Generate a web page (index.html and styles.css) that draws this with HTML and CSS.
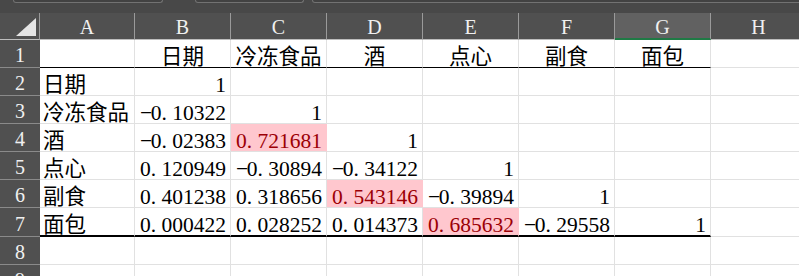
FILE: index.html
```html
<!DOCTYPE html>
<html lang="zh">
<head>
<meta charset="utf-8">
<link rel="stylesheet" href="styles.css">
</head>
<body>
<div class="app">
  <div class="topbar">
    <div class="box box1"></div>
    <div class="box box2"></div>
    <div class="box box3"></div>
  </div>
  <div class="sheet">
    <div class="corner"><svg width="20" height="18" viewBox="0 0 20 18"><polygon points="20,0 20,18 0,18" fill="#e4e4e4"/></svg></div>
    <div class="ch">A</div><div class="ch">B</div><div class="ch">C</div><div class="ch">D</div><div class="ch">E</div><div class="ch">F</div><div class="ch sel">G</div><div class="ch">H</div>

    <div class="rh">1</div>
    <div class="c bb1"></div><div class="c ctr bb1">日期</div><div class="c ctr bb1">冷冻食品</div><div class="c ctr bb1">酒</div><div class="c ctr bb1">点心</div><div class="c ctr bb1">副食</div><div class="c ctr bb1">面包</div><div class="c"></div>

    <div class="rh">2</div>
    <div class="c lbl">日期</div><div class="c num">1</div><div class="c"></div><div class="c"></div><div class="c"></div><div class="c"></div><div class="c"></div><div class="c"></div>

    <div class="rh">3</div>
    <div class="c lbl">冷冻食品</div><div class="c num"><span class="m">−</span>0<span class="d">.</span>10322</div><div class="c num">1</div><div class="c"></div><div class="c"></div><div class="c"></div><div class="c"></div><div class="c"></div>

    <div class="rh">4</div>
    <div class="c lbl">酒</div><div class="c num"><span class="m">−</span>0<span class="d">.</span>02383</div><div class="c num pk">0<span class="d">.</span>721681</div><div class="c num">1</div><div class="c"></div><div class="c"></div><div class="c"></div><div class="c"></div>

    <div class="rh">5</div>
    <div class="c lbl">点心</div><div class="c num">0<span class="d">.</span>120949</div><div class="c num"><span class="m">−</span>0<span class="d">.</span>30894</div><div class="c num"><span class="m">−</span>0<span class="d">.</span>34122</div><div class="c num">1</div><div class="c"></div><div class="c"></div><div class="c"></div>

    <div class="rh">6</div>
    <div class="c lbl">副食</div><div class="c num">0<span class="d">.</span>401238</div><div class="c num">0<span class="d">.</span>318656</div><div class="c num pk">0<span class="d">.</span>543146</div><div class="c num"><span class="m">−</span>0<span class="d">.</span>39894</div><div class="c num">1</div><div class="c"></div><div class="c"></div>

    <div class="rh">7</div>
    <div class="c lbl bb2">面包</div><div class="c num bb2">0<span class="d">.</span>000422</div><div class="c num bb2">0<span class="d">.</span>028252</div><div class="c num bb2">0<span class="d">.</span>014373</div><div class="c num pk bb2">0<span class="d">.</span>685632</div><div class="c num bb2"><span class="m">−</span>0<span class="d">.</span>29558</div><div class="c num bb2">1</div><div class="c"></div>

    <div class="rh">8</div>
    <div class="c"></div><div class="c"></div><div class="c"></div><div class="c"></div><div class="c"></div><div class="c"></div><div class="c"></div><div class="c"></div>

    <div class="rh">9</div>
    <div class="c"></div><div class="c"></div><div class="c"></div><div class="c"></div><div class="c"></div><div class="c"></div><div class="c"></div><div class="c"></div>
  </div>
</div>
</body>
</html>
```
FILE: styles.css
```css
html, body {
  margin: 0;
  padding: 0;
  width: 799px;
  height: 276px;
  overflow: hidden;
  background: #ffffff;
}

.app {
  width: 799px;
  height: 276px;
  overflow: hidden;
  font-family: "Liberation Serif", "Noto Sans CJK SC", serif;
}

.topbar {
  height: 13px;
  background: #484848;
  display: flex;
  align-items: flex-start;
  box-sizing: border-box;
}

.box {
  height: 3px;
  border: 1px solid #727272;
  border-top: none;
  border-radius: 0 0 7px 7px;
  box-sizing: border-box;
  background: #424242;
}

.box1 { margin-left: 13px; width: 150px; }
.box2 { margin-left: 32px; width: 109px; }
.box3 { margin-left: 8px; flex: 1; margin-right: -20px; }

.sheet {
  display: grid;
  grid-template-columns: 40px 95px 96px 96px 96px 96px 96px 96px 96px;
  grid-template-rows: 27px 28px 28px 28px 28px 28px 28px 29px 28px 28px;
}

.corner {
  background: #505050;
  border-right: 1px solid #9a9a9a;
  border-bottom: 1px solid #bdbdbd;
  box-sizing: border-box;
  display: flex;
  align-items: flex-end;
  justify-content: flex-end;
  padding: 0 3px 3px 0;
}

.corner svg { display: block; }

.ch {
  background: #505050;
  color: #f0f0f0;
  font-size: 20px;
  border-right: 1px solid #9a9a9a;
  border-bottom: 1px solid #bdbdbd;
  box-sizing: border-box;
  display: flex;
  align-items: flex-end;
  justify-content: center;
  line-height: 20px;
  padding-bottom: 2px;
}

.ch.sel {
  background: #616161;
  border-bottom: 2px solid #1f7a45;
  padding-bottom: 1px;
}

.rh {
  background: #505050;
  color: #f0f0f0;
  font-size: 20px;
  border-bottom: 1px solid #8a8a8a;
  box-sizing: border-box;
  display: flex;
  align-items: flex-end;
  justify-content: center;
  line-height: 20px;
  padding-bottom: 2px;
}

.c {
  background: #ffffff;
  color: #000000;
  font-size: 21.5px;
  border-right: 1px solid #e1e1e1;
  border-bottom: 1px solid #e1e1e1;
  box-sizing: border-box;
  display: flex;
  align-items: flex-end;
  line-height: 20px;
  white-space: nowrap;
  overflow: visible;
}

.lbl { justify-content: flex-start; padding-left: 3px; }
.num { justify-content: flex-end; padding-right: 4px; }
.ctr { justify-content: center; }

.bb1 { border-bottom: 1px solid #000000; }
.bb2 { border-bottom: 2px solid #000000; }

.pk {
  background: #ffc7ce;
  color: #9c0006;
  border-right-color: #ffc7ce;
}

.d {
  display: inline-block;
  width: 0.5em;
  text-align: left;
}

.m {
  display: inline-block;
  width: 0.5em;
  text-align: center;
}
```
